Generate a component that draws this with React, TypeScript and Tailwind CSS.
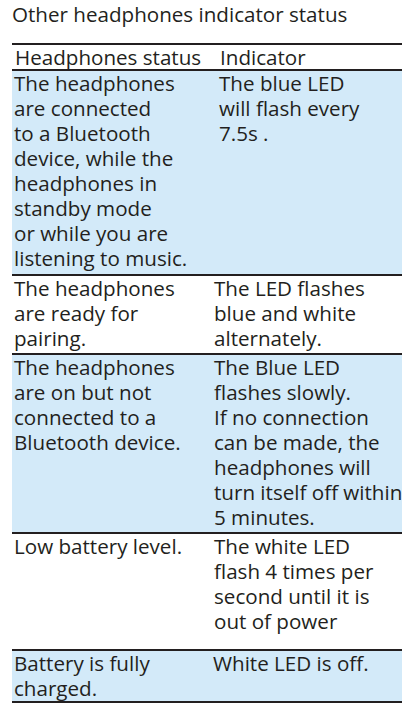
import React from "react";

const rows: { bg: boolean; left: string[]; right: string[]; pr: string; cls: string }[] = [
  {
    bg: true,
    left: [
      "The headphones",
      "are connected",
      "to a Bluetooth",
      "device, while the",
      "headphones in",
      "standby mode",
      "or while you are",
      "listening to music.",
    ],
    right: ["The blue LED", "will flash every", "7.5s ."],
    pr: "pl-[7px]",
    cls: "h-[203px]",
  },
  {
    bg: false,
    left: ["The headphones", "are ready for", "pairing."],
    right: ["The LED flashes", "blue and white", "alternately."],
    pr: "pl-[2px]",
    cls: "h-[77px]",
  },
  {
    bg: true,
    left: ["The headphones", "are on but not", "connected to a", "Bluetooth device."],
    right: [
      "The Blue LED",
      "flashes slowly.",
      "If no connection",
      "can be made, the",
      "headphones will",
      "turn itself off within",
      "5 minutes.",
    ],
    pr: "pl-[2px]",
    cls: "h-[177px]",
  },
  {
    bg: false,
    left: ["Low battery level."],
    right: ["The white LED", "flash 4 times per", "second until it is", "out of power"],
    pr: "pl-[2px]",
    cls: "h-[115px]",
  },
  {
    bg: true,
    left: ["Battery is fully", "charged."],
    right: ["White LED is off."],
    pr: "pl-[1px]",
    cls: "h-[50px]",
  },
];

export default function App() {
  return (
    <div
      className="w-[414px] h-[710px] bg-white text-[#231f20] overflow-hidden"
      style={{ fontFamily: '"Open Sans", "Noto Sans", sans-serif' }}
    >
      <div className="pl-[12px] pt-[0px] text-[20.6px] leading-[28px] whitespace-nowrap">
        Other headphones indicator status
      </div>
      <div className="mx-[12px] mt-[15px] border-t-2 border-[#231f20]">
        <div className="grid grid-cols-[200px_1fr] h-[26px] border-b-2 border-[#231f20] text-[20.6px] leading-[25px]">
          <div className="pl-[3px] whitespace-nowrap">Headphones status</div>
          <div className="pl-[8px] whitespace-nowrap">Indicator</div>
        </div>
        {rows.map((r, i) => (
          <div
            key={i}
            className={`grid grid-cols-[200px_1fr] border-b-2 border-[#231f20] text-[20.6px] leading-[25px] box-content ${r.cls} ${
              r.bg ? "bg-[#d3eaf9]" : "bg-white"
            }`}
          >
            <div className="pl-[2px] whitespace-nowrap">
              {r.left.map((l, j) => (
                <div key={j}>{l}</div>
              ))}
            </div>
            <div className={`${r.pr} whitespace-nowrap`}>
              {r.right.map((l, j) => (
                <div key={j}>{l}</div>
              ))}
            </div>
          </div>
        ))}
      </div>
    </div>
  );
}
